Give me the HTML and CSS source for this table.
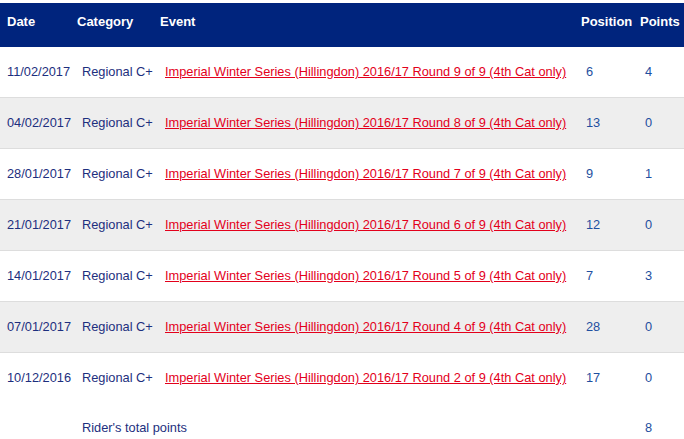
FILE: index.html
```html
<!DOCTYPE html>
<html>
<head>
<meta charset="utf-8">
<link rel="stylesheet" href="styles.css">
</head>
<body>
<table class="results">
  <thead>
    <tr>
      <th class="c-date">Date</th>
      <th class="c-cat">Category</th>
      <th class="c-event">Event</th>
      <th class="c-pos">Position</th>
      <th class="c-pts">Points</th>
    </tr>
  </thead>
  <tbody>
    <tr><td>11/02/2017</td><td>Regional C+</td><td><a href="#">Imperial Winter Series (Hillingdon) 2016/17 Round 9 of 9 (4th Cat only)</a></td><td class="num">6</td><td class="num">4</td></tr>
    <tr class="alt"><td>04/02/2017</td><td>Regional C+</td><td><a href="#">Imperial Winter Series (Hillingdon) 2016/17 Round 8 of 9 (4th Cat only)</a></td><td class="num">13</td><td class="num">0</td></tr>
    <tr><td>28/01/2017</td><td>Regional C+</td><td><a href="#">Imperial Winter Series (Hillingdon) 2016/17 Round 7 of 9 (4th Cat only)</a></td><td class="num">9</td><td class="num">1</td></tr>
    <tr class="alt"><td>21/01/2017</td><td>Regional C+</td><td><a href="#">Imperial Winter Series (Hillingdon) 2016/17 Round 6 of 9 (4th Cat only)</a></td><td class="num">12</td><td class="num">0</td></tr>
    <tr><td>14/01/2017</td><td>Regional C+</td><td><a href="#">Imperial Winter Series (Hillingdon) 2016/17 Round 5 of 9 (4th Cat only)</a></td><td class="num">7</td><td class="num">3</td></tr>
    <tr class="alt"><td>07/01/2017</td><td>Regional C+</td><td><a href="#">Imperial Winter Series (Hillingdon) 2016/17 Round 4 of 9 (4th Cat only)</a></td><td class="num">28</td><td class="num">0</td></tr>
    <tr class="last"><td>10/12/2016</td><td>Regional C+</td><td><a href="#">Imperial Winter Series (Hillingdon) 2016/17 Round 2 of 9 (4th Cat only)</a></td><td class="num">17</td><td class="num">0</td></tr>
    <tr class="total"><td></td><td colspan="3">Rider's total points</td><td class="num">8</td></tr>
  </tbody>
</table>
</body>
</html>
```

FILE: styles.css
```css
html, body {
  margin: 0;
  padding: 0;
  background: #ffffff;
}
body {
  padding-top: 3px;
  font-family: "Liberation Sans", Arial, sans-serif;
  font-size: 13px;
  color: #1d2f7e;
}
.results {
  border-collapse: collapse;
  width: 684px;
  table-layout: fixed;
}
.results th {
  background: #00247d;
  color: #ffffff;
  font-weight: bold;
  text-align: left;
  vertical-align: top;
  height: 44px;
  box-sizing: border-box;
  padding: 11px 0 0 2px;
  white-space: nowrap;
}
.results th.c-date { width: 75px; padding-left: 7px; }
.results th.c-cat { width: 83px; }
.results th.c-event { width: 421px; }
.results th.c-pos { width: 59px; }
.results td {
  height: 49px;
  padding: 0 0 1px 7px;
  font-size: 12.8px;
  vertical-align: middle;
  border-bottom: 1px solid #dddddd;
  white-space: nowrap;
}
.results tr.alt td { background: #eeeeee; }
.results tr.last td { border-bottom: none; }
.results td.num { color: #1e4fa0; }
.results a { color: #e3001b; text-decoration: underline; }
.results tr.total td { border-bottom: none; height: 48px; }
```
